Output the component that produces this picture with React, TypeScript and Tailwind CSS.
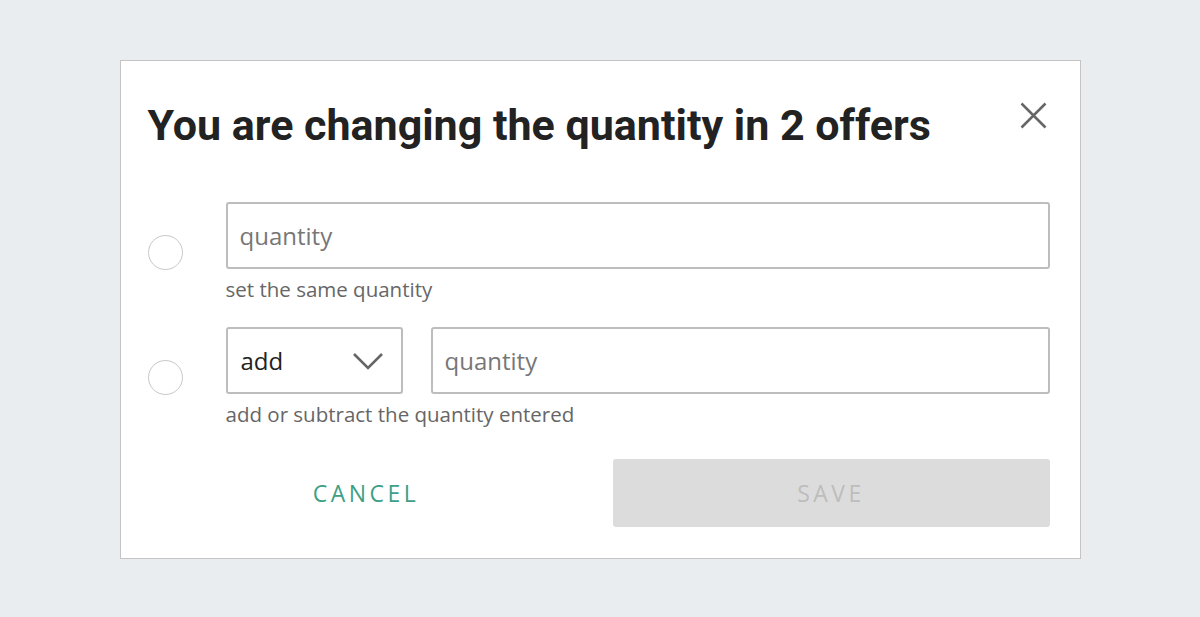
import { useState } from "react";

export default function App() {
    const [mode, setMode] = useState<"set" | "change">("set");

    return (
        <div className="w-[1200px] h-[617px] bg-[#e9edf0] flex items-start justify-center pt-[60px]">
            <div className="w-[961px] h-[499px] bg-white border border-[#c4c4c4] pl-[27px] pr-[30px] pt-[38px] pb-[31px] flex flex-col">
                {/* Header */}
                <div className="flex items-start justify-between">
                    <h2 className="font-['Roboto',sans-serif] font-bold text-[43px] leading-[52px] text-[#222]">
                        You are changing the quantity in 2 offers
                    </h2>
                    <button className="mt-[2px] mr-[2px] w-[28px] h-[28px] flex items-center justify-center text-[#666]">
                        <svg width="27" height="27" viewBox="0 0 27 27" fill="none" stroke="currentColor" strokeWidth="2.5">
                            <path d="M1.5 1.5L25.5 25.5M25.5 1.5L1.5 25.5" />
                        </svg>
                    </button>
                </div>

                {/* Options */}
                <div className="mt-[51px] font-['Open_Sans',sans-serif]">
                    <div className="flex items-center">
                        <div className="w-[78px]">
                            <button
                                onClick={() => setMode("set")}
                                className="block w-[35px] h-[35px] rounded-full border border-[#c8c8c8] bg-white"
                            />
                        </div>
                        <div className="flex-1">
                            <input
                                placeholder="quantity"
                                className="block w-full h-[67px] border-2 border-[#bdbdbd] rounded-[3px] px-[12px] text-[24px] text-[#222] placeholder:text-[#777] outline-none"
                            />
                            <p className="mt-[6px] text-[20.5px] leading-[28px] text-[#666]">set the same quantity</p>
                        </div>
                    </div>

                    <div className="flex items-center mt-[24px]">
                        <div className="w-[78px]">
                            <button
                                onClick={() => setMode("change")}
                                className="block w-[35px] h-[35px] rounded-full border border-[#c8c8c8] bg-white"
                            />
                        </div>
                        <div className="flex-1">
                            <div className="flex gap-[28px]">
                                <div className="w-[177px] h-[67px] border-2 border-[#bdbdbd] rounded-[3px] pl-[13px] pr-[17px] flex items-center justify-between">
                                    <span className="text-[24px] text-[#222]">add</span>
                                    <svg width="32" height="20" viewBox="0 0 32 20" fill="none" stroke="#666" strokeWidth="2.6">
                                        <path d="M2 3L16 17L30 3" />
                                    </svg>
                                </div>
                                <input
                                    placeholder="quantity"
                                    className="flex-1 h-[67px] border-2 border-[#bdbdbd] rounded-[3px] px-[12px] text-[24px] text-[#222] placeholder:text-[#777] outline-none"
                                />
                            </div>
                            <p className="mt-[6px] text-[20.5px] leading-[28px] text-[#666]">add or subtract the quantity entered</p>
                        </div>
                    </div>
                </div>

                {/* Actions */}
                <div className="mt-auto grid grid-cols-[1fr_437px] gap-[28px] font-['Open_Sans',sans-serif]">
                    <button className="h-[68px] text-[23px] tracking-[3.5px] text-[#3e9f86]">CANCEL</button>
                    <button disabled className="h-[68px] rounded-[3px] bg-[#dcdcdc] text-[23px] tracking-[3.5px] text-[#bdbdbd]">
                        SAVE
                    </button>
                </div>
            </div>
        </div>
    );
}
